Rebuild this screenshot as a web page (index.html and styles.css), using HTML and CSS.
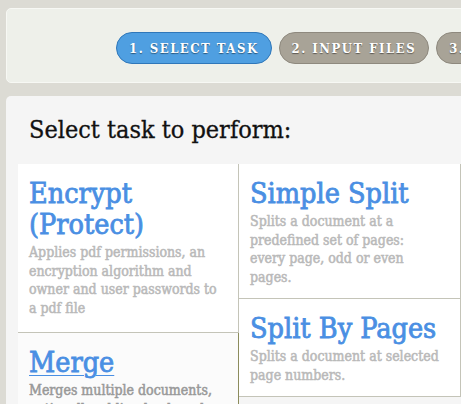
FILE: index.html
```html
<!DOCTYPE html>
<html>
<head>
<meta charset="utf-8">
<link rel="stylesheet" href="styles.css">
</head>
<body>
<div class="page">
  <header class="steps">
    <a class="step step-active">1. SELECT TASK</a>
    <a class="step">2. INPUT FILES</a>
    <a class="step">3. SETTINGS</a>
  </header>
  <main class="panel">
    <h1 class="heading">Select task to perform:</h1>
    <div class="tasks">
      <div class="col col-left">
        <div class="task">
          <h2 class="task-title">Encrypt (Protect)</h2>
          <p class="task-desc">Applies pdf permissions, an encryption algorithm and owner and user passwords to a pdf file</p>
        </div>
        <div class="task task-hover">
          <h2 class="task-title">Merge</h2>
          <p class="task-desc">Merges multiple documents, optionally adding bookmarks</p>
        </div>
      </div>
      <div class="col col-right">
        <div class="task">
          <h2 class="task-title">Simple Split</h2>
          <p class="task-desc">Splits a document at a predefined set of pages: every page, odd or even pages.</p>
        </div>
        <div class="task">
          <h2 class="task-title">Split By Pages</h2>
          <p class="task-desc">Splits a document at selected page numbers.</p>
        </div>
      </div>
    </div>
  </main>
</div>
</body>
</html>
```
FILE: styles.css
```css
html, body {
  margin: 0;
  padding: 0;
}
body {
  background: #dcdbd4;
  font-family: "DejaVu Serif Condensed", "DejaVu Serif", serif;
  overflow: hidden;
  width: 461px;
  height: 404px;
}
.page {
  padding: 8px 0 0 6px;
  width: 700px;
}
.steps {
  display: flex;
  gap: 7px;
  height: 75px;
  box-sizing: border-box;
  padding: 23px 0 0 109px;
  background: #eef0ea;
  border: 1px solid #f7f8f4;
  border-radius: 5px;
}
.step {
  display: flex;
  align-items: center;
  justify-content: center;
  height: 32px;
  box-sizing: border-box;
  padding: 0 12px;
  border-radius: 16px;
  background: #a8a397;
  border: 1px solid #8e897e;
  color: #fff;
  font-weight: bold;
  font-size: 13px;
  letter-spacing: 1.5px;
  text-shadow: 0 1px 1px rgba(0,0,0,0.45);
  white-space: nowrap;
}
.step-active {
  background: #4f9fe1;
  border-color: #2f77b9;
}
.panel {
  margin-top: 13px;
  background: #f5f5f5;
  border-radius: 5px 0 0 0;
  padding: 18px 0 0 12px;
  height: 400px;
}
.heading {
  margin: 0 0 0 11px;
  font-size: 25px;
  font-weight: normal;
  line-height: 32px;
  color: #111;
  -webkit-text-stroke: 0.3px #111;
}
.tasks {
  display: flex;
  margin-top: 18px;
}
.col {
  display: flex;
  flex-direction: column;
  align-items: stretch;
}
.col-left {
  width: 221px;
}
.col-right {
  width: 222px;
}
.task {
  background: #fff;
  border-right: 1px solid #c4c4b8;
  border-bottom: 1px solid #c4c4b8;
  padding: 14px 11px 12px;
}
.col-left .task {
  padding-bottom: 15px;
}
.col-right .task {
  padding-right: 19px;
}
.task-hover {
  background: #fbfbfb;
  border-right-color: #8c8c5c;
}
.task-title {
  margin: 0;
  font-size: 28.5px;
  line-height: 31px;
  font-weight: normal;
  color: #4a8fe3;
  -webkit-text-stroke: 0.8px #4a8fe3;
}
.task-hover .task-title {
  text-decoration: underline;
  text-decoration-thickness: 1px;
  text-underline-offset: 3px;
}
.task-desc {
  margin: 3px 0 0;
  font-size: 14px;
  line-height: 18.5px;
  color: #b9b9b9;
  font-weight: normal;
  -webkit-text-stroke: 0.5px #b9b9b9;
}
.task-hover .task-desc {
  color: #999999;
  -webkit-text-stroke-color: #999999;
}
```
